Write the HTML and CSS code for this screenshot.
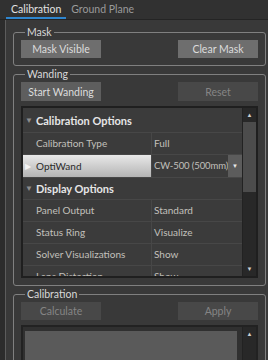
FILE: index.html
```html
<!DOCTYPE html>
<html lang="en">
<head>
    <meta charset="UTF-8">
    <title>Calibration</title>
    <link rel="stylesheet" href="styles.css">
</head>
<body>
    <!-- tabs -->
    <div class="tabs">
        <span class="tab active">Calibration</span>
        <span class="tab">Ground Plane</span>
    </div>

    <div class="panel">
        <!-- Mask -->
        <fieldset class="group">
            <legend>Mask</legend>
            <div class="btn-row">
                <button class="btn">Mask Visible</button>
                <button class="btn">Clear Mask</button>
            </div>
        </fieldset>

        <!-- Wanding -->
        <fieldset class="group">
            <legend>Wanding</legend>
            <div class="btn-row">
                <button class="btn btn-dim">Start Wanding</button>
                <button class="btn btn-off">Reset</button>
            </div>
            <div class="tree">
                <div class="tree-body">
                    <div class="row head first"><span class="arrow">&#9660;</span>Calibration Options</div>
                    <div class="row"><span class="name">Calibration Type</span><span class="value">Full</span></div>
                    <div class="row sel">
                        <span class="name"><span class="arrow">&#9654;</span>OptiWand</span>
                        <span class="value"><span class="combo-text">CW-500 (500mm)</span><span class="drop">&#9660;</span></span>
                    </div>
                    <div class="row head"><span class="arrow">&#9660;</span>Display Options</div>
                    <div class="row"><span class="name">Panel Output</span><span class="value">Standard</span></div>
                    <div class="row"><span class="name">Status Ring</span><span class="value">Visualize</span></div>
                    <div class="row"><span class="name">Solver Visualizations</span><span class="value">Show</span></div>
                    <div class="row"><span class="name">Lens Distortion</span><span class="value">Show</span></div>
                </div>
                <div class="scrollbar">
                    <span class="sb-btn">&#9650;</span>
                    <span class="thumb"></span>
                    <span class="sb-fill"></span>
                    <span class="sb-btn">&#9660;</span>
                </div>
            </div>
        </fieldset>

        <!-- Calibration -->
        <fieldset class="group">
            <legend>Calibration</legend>
            <div class="btn-row">
                <button class="btn btn-off">Calculate</button>
                <button class="btn btn-off">Apply</button>
            </div>
            <div class="result">
                <div class="result-area"></div>
                <div class="scrollbar">
                    <span class="sb-btn">&#9650;</span>
                    <span class="sb-fill"></span>
                </div>
            </div>
        </fieldset>
    </div>
</body>
</html>
```

FILE: styles.css
```css
body {
    margin: 0;
    width: 268px;
    height: 360px;
    overflow: hidden;
    background-color: #2c2c2c;
    color: #c2c0bc;
    font-family: Lato, sans-serif;
    font-size: 10px;
}

.tabs {
    display: flex;
    height: 19px;
    padding-left: 6px;
    border-bottom: 1px solid #242424;
    background-color: #313131;
}

.tab {
    padding: 2px 5px 0;
    line-height: 15px;
    font-size: 10.5px;
    color: #9a9a9a;
}

.tab.active {
    color: #e2e2e2;
    border-bottom: 2px solid #2f86cf;
}

.panel {
    margin-left: 5px;
    border-left: 1px solid #5c5c5c;
    background-color: #393939;
    padding: 6px 2px 0 7px;
    height: 400px;
}

.group {
    margin: 0 0 2px;
    padding: 2px 7px 7px 7px;
    border: 1px solid #808080;
    border-radius: 3px;
}

.group legend {
    margin-left: 4px;
    padding: 0 2px;
    line-height: 12px;
    font-size: 10.5px;
    color: #d8d8d8;
}

.btn-row {
    display: flex;
    justify-content: space-between;
}

.btn {
    width: 80px;
    height: 18px;
    padding: 0;
    border: none;
    background-color: #6e6e6e;
    color: #dcdcdc;
    font-family: inherit;
    font-size: 10.5px;
}

.btn-dim {
    height: 19px;
    background-color: #5e5e5e;
}

.btn-off {
    background-color: #484848;
    color: #858585;
}

.btn-row .btn-dim + .btn-off {
    height: 19px;
}

/* property tree */
.tree {
    display: flex;
    height: 168px;
    margin-top: 5px;
    border: 2px solid #1f1f1f;
    background-color: #3b3b3b;
    overflow: hidden;
}

.tree-body {
    flex: 1;
}

.row {
    display: grid;
    grid-template-columns: 129px 1fr;
    height: 21px;
    line-height: 21px;
    border-bottom: 1px solid #474747;
}

.row.head {
    display: block;
    padding-left: 2px;
    color: #e6e6e6;
    font-weight: bold;
    font-size: 11px;
}

.row.first {
    height: 24px;
    line-height: 25px;
}

.arrow {
    display: inline-block;
    width: 11px;
    color: #8c8c8c;
    font-size: 8px;
    vertical-align: top;
}

.name {
    padding-left: 13px;
    border-right: 1px solid #474747;
    white-space: nowrap;
    overflow: hidden;
}

.value {
    padding-left: 2px;
    white-space: nowrap;
    overflow: hidden;
}

.row.sel {
    height: 22px;
    line-height: 22px;
}

.row.sel .name {
    padding-left: 2px;
    background: linear-gradient(#e8e8e8, #b4b4b4);
    color: #2a2a2a;
}

.row.sel .name .arrow {
    color: #f4f4f4;
}

.row.sel .value {
    display: flex;
    justify-content: space-between;
}

.combo-text {
    font-size: 9.5px;
    letter-spacing: -0.1px;
}

.drop {
    width: 14px;
    background-color: #5c5c5c;
    color: #e8e8e8;
    font-size: 6px;
    text-align: center;
}

.scrollbar {
    display: flex;
    flex-direction: column;
    width: 13px;
    border-left: 1px solid #222;
    background-color: #282828;
}

.sb-btn {
    height: 14px;
    line-height: 14px;
    color: #d0d0d0;
    font-size: 6px;
    text-align: center;
}

.thumb {
    height: 70px;
    background-color: #4c4c4c;
}

.sb-fill {
    flex: 1;
}

/* bottom result box */
.result {
    display: flex;
    height: 60px;
    margin-top: 5px;
    border: 2px solid #222;
    background-color: #303030;
}

.result-area {
    flex: 1;
    margin: 4px 5px 0 2px;
    background-color: #5a5a5a;
}
```
